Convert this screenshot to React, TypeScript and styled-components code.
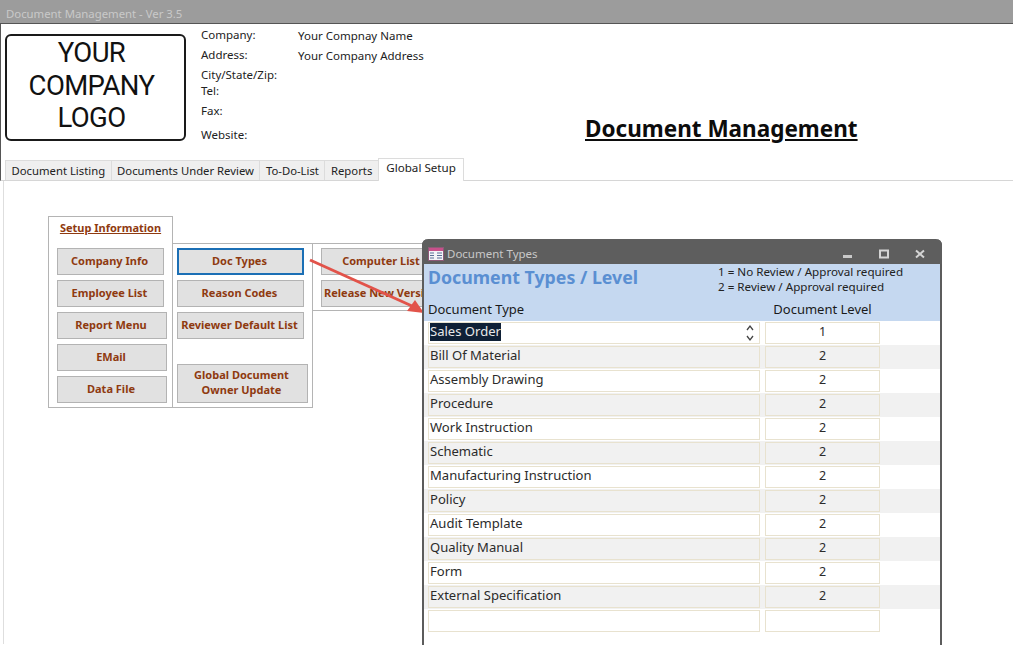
import React from 'react';
import styled, { createGlobalStyle } from 'styled-components';

const GlobalStyle = createGlobalStyle`
  html, body {
    margin: 0;
    padding: 0;
    background: #fff;
    font-family: "Noto Sans", "Open Sans", sans-serif;
    color: #1c1c1c;
  }
`;

const docTypes = [
  { name: 'Sales Order', level: '1' },
  { name: 'Bill Of Material', level: '2' },
  { name: 'Assembly Drawing', level: '2' },
  { name: 'Procedure', level: '2' },
  { name: 'Work Instruction', level: '2' },
  { name: 'Schematic', level: '2' },
  { name: 'Manufacturing Instruction', level: '2' },
  { name: 'Policy', level: '2' },
  { name: 'Audit Template', level: '2' },
  { name: 'Quality Manual', level: '2' },
  { name: 'Form', level: '2' },
  { name: 'External Specification', level: '2' },
  { name: '', level: '' },
];

const tabs = ['Document Listing', 'Documents Under Review', 'To-Do-List', 'Reports'];

const companyRows = [
  { label: 'Company:', value: 'Your Compnay Name', height: 20 },
  { label: 'Address:', value: 'Your Company Address', height: 20 },
  { label: 'City/State/Zip:', value: '', height: 16 },
  { label: 'Tel:', value: '', height: 20 },
  { label: 'Fax:', value: '', height: 24 },
  { label: 'Website:', value: '', height: 16 },
];

const App = () => {
  return (
    <Page>
      <GlobalStyle />
      <AppTitle>Document Management - Ver 3.5</AppTitle>
      <Body>
        <Header>
          <Logo>YOUR<br />COMPANY<br />LOGO</Logo>
          <CompanyInfo>
            {companyRows.map((row) => (
              <CompanyRow key={row.label} $height={row.height}>
                <CompanyLabel>{row.label}</CompanyLabel>
                <CompanyValue>{row.value}</CompanyValue>
              </CompanyRow>
            ))}
          </CompanyInfo>
          <Heading>Document Management</Heading>
        </Header>
        <TabBar>
          {tabs.map((tab) => <Tab key={tab}>{tab}</Tab>)}
          <ActiveTab>Global Setup</ActiveTab>
        </TabBar>
        <SetupArea>
          <SetupColumn>
            <SetupTitle>Setup Information</SetupTitle>
            <SetupButton $width={107}>Company Info</SetupButton>
            <SetupButton $width={107}>Employee List</SetupButton>
            <SetupButton $width={110}>Report Menu</SetupButton>
            <SetupButton $width={110}>EMail</SetupButton>
            <SetupButton $width={110}>Data File</SetupButton>
          </SetupColumn>
          <MiddleColumn>
            <SetupButton $width={127} $focused>Doc Types</SetupButton>
            <SetupButton $width={127}>Reason Codes</SetupButton>
            <SetupButton $width={127}>Reviewer Default List</SetupButton>
            <SetupButton $width={131} $tall>Global Document<br />Owner Update</SetupButton>
          </MiddleColumn>
          <RightColumn>
            <SetupButton $width={122}>Computer List</SetupButton>
            <SetupButton $width={122}>Release New Version</SetupButton>
          </RightColumn>
        </SetupArea>
      </Body>

      <Arrow viewBox="0 0 125 62" aria-hidden="true">
        <line x1="2" y1="2" x2="104" y2="48" stroke="#e2534a" strokeWidth="3" />
        <polygon points="116,55 99,53 107,42" fill="#e2534a" />
      </Arrow>

      <DocWindow>
        <WindowBar>
          <WindowIcon viewBox="0 0 16 14" aria-hidden="true">
            <rect x="0.5" y="0.5" width="15" height="13" fill="#f4f4f8" stroke="#8d5a78" />
            <rect x="1" y="1" width="14" height="3" fill="#c8508a" />
            <path d="M2 6h4M2 8.5h4M2 11h4M9 6h5M9 8.5h5M9 11h5" stroke="#5a6f96" strokeWidth="1" />
          </WindowIcon>
          <WindowTitle>Document Types</WindowTitle>
          <WindowControls>
            <svg width="10" height="10" viewBox="0 0 10 10" aria-hidden="true">
              <rect x="0" y="6" width="9" height="3" fill="#c9c9c9" />
            </svg>
            <svg width="10" height="10" viewBox="0 0 10 10" aria-hidden="true">
              <rect x="1" y="1.5" width="8" height="7" fill="none" stroke="#d4d4d4" strokeWidth="2" />
            </svg>
            <svg width="10" height="10" viewBox="0 0 10 10" aria-hidden="true">
              <path d="M1 1.5l8 7M9 1.5l-8 7" stroke="#d4d4d4" strokeWidth="2" />
            </svg>
          </WindowControls>
        </WindowBar>
        <FormHeader>
          <FormTop>
            <FormTitle>Document Types / Level</FormTitle>
            <Legend>
              <div>1 = No Review / Approval required</div>
              <div>2 = Review / Approval required</div>
            </Legend>
          </FormTop>
          <ColumnHeads>
            <TypeHead>Document Type</TypeHead>
            <LevelHead>Document Level</LevelHead>
          </ColumnHeads>
        </FormHeader>
        <Rows>
          {docTypes.map((doc, i) => (
            <Row key={i} $alt={i % 2 === 1}>
              <TypeCell>
                {i === 0 ? <Selected>{doc.name}</Selected> : doc.name}
                {i === 0 && (
                  <Spinner viewBox="0 0 10 20" aria-hidden="true">
                    <path d="M2 7l3-4 3 4M2 13l3 4 3-4" fill="none" stroke="#444" strokeWidth="1.3" />
                  </Spinner>
                )}
              </TypeCell>
              <LevelCell>{doc.level}</LevelCell>
            </Row>
          ))}
        </Rows>
      </DocWindow>
    </Page>
  );
};

const Page = styled.div`
  position: relative;
  width: 1013px;
  height: 645px;
  overflow: hidden;
  font-size: 11.5px;
`;

const AppTitle = styled.div`
  height: 23px;
  background: #9c9c9c;
  color: #c9c9c9;
  font-size: 11.35px;
  line-height: 27px;
  padding-left: 6px;
  box-sizing: border-box;
`;

const Body = styled.div`
  display: flex;
  flex-direction: column;
  border-top: 1px solid #555;
  height: 621px;
  box-sizing: border-box;
`;

const Header = styled.div`
  display: flex;
  align-items: flex-start;
  height: 135px;
  padding: 10px 0 0 4px;
  box-sizing: border-box;
  border-left: 1px solid #555;
`;

const Logo = styled.div`
  width: 181px;
  height: 107px;
  box-sizing: border-box;
  border: 2px solid #1a1a1a;
  border-radius: 6px;
  font-family: Roboto, "Noto Sans", sans-serif;
  font-size: 27.5px;
  line-height: 32.5px;
  text-align: center;
  letter-spacing: -0.6px;
  color: #111;
  padding: 1px 8px 0 0;
`;

const CompanyInfo = styled.div`
  margin: -9px 0 0 15px;
  width: 384px;
  flex: none;
`;

const CompanyRow = styled.div<{ $height: number }>`
  display: flex;
  height: ${(p) => p.$height}px;
  line-height: 20px;
  color: #222;
`;

const CompanyLabel = styled.span`
  width: 97px;
`;

const CompanyValue = styled.span`
  padding-top: 1px;
`;

const Heading = styled.h1`
  margin: 80px 0 0 0;
  font-family: "Noto Sans", sans-serif;
  font-size: 22.5px;
  line-height: 30px;
  font-weight: 700;
  text-decoration: underline;
  color: #0c0c0c;
  white-space: nowrap;
`;

const TabBar = styled.div`
  display: flex;
  align-items: flex-end;
  height: 21px;
  padding-left: 4px;
  border-left: 1px solid #555;
  border-bottom: 1px solid #d6d6d6;
`;

const Tab = styled.div`
  height: 20px;
  line-height: 19px;
  padding: 0 5.5px;
  background: #efefef;
  border: 1px solid #dcdcdc;
  border-bottom: none;
  margin-right: -1px;
  font-size: 11.3px;
  box-sizing: border-box;
  color: #222;
  white-space: nowrap;
`;

const ActiveTab = styled(Tab)`
  position: relative;
  height: 23px;
  line-height: 18px;
  background: #fff;
  margin-bottom: -1px;
  padding: 0 7.5px;
  font-size: 11.6px;
`;

const SetupArea = styled.div`
  flex: 1;
  display: flex;
  align-items: flex-start;
  margin-left: 3px;
  border-left: 1px solid #dedede;
  padding: 35px 0 0 44px;
`;

const Column = styled.div`
  display: flex;
  flex-direction: column;
  gap: 5px;
  border: 1px solid #b4b4b4;
  box-sizing: border-box;
`;

const SetupColumn = styled(Column)`
  width: 125px;
  height: 192px;
  padding: 0 0 0 8px;
`;

const SetupTitle = styled.div`
  height: 26px;
  margin-left: -8px;
  text-align: center;
  line-height: 21px;
  font-weight: 700;
  font-size: 11px;
  text-decoration: underline;
  color: #8f3a10;
`;

const MiddleColumn = styled(Column)`
  width: 140px;
  height: 165px;
  margin: 27px 0 0 0;
  padding: 4px 0 0 4px;
  border-left: none;
`;

const RightColumn = styled(Column)`
  width: 133px;
  height: 68px;
  margin: 27px 0 0 0;
  padding: 4px 0 0 8px;
  border-left: none;
`;

const SetupButton = styled.button<{ $width: number; $tall?: boolean; $focused?: boolean }>`
  width: ${(p) => p.$width}px;
  height: ${(p) => (p.$tall ? 39 : 27)}px;
  margin-top: ${(p) => (p.$tall ? 20 : 0)}px;
  padding: 0 2px ${(p) => (p.$tall ? 4 : 2)}px 0;
  flex: none;
  background: #e1e1e1;
  border: ${(p) => (p.$focused ? '2px solid #1b6fb5' : '1px solid #b3b3b3')};
  font-family: "Noto Sans", sans-serif;
  font-size: 11px;
  line-height: 15px;
  font-weight: 700;
  color: #8f3a10;
  white-space: nowrap;
  overflow: hidden;
`;

const Arrow = styled.svg`
  position: absolute;
  left: 308px;
  top: 258px;
  width: 125px;
  height: 62px;
  z-index: 1;
`;

const DocWindow = styled.div`
  position: absolute;
  left: 422px;
  top: 239px;
  width: 520px;
  height: 420px;
  box-sizing: border-box;
  background: #fff;
  border: 2px solid #5c5c5c;
  border-top: none;
  border-radius: 6px 6px 0 0;
  z-index: 2;
`;

const WindowBar = styled.div`
  display: flex;
  align-items: center;
  height: 25px;
  margin: 0 -2px;
  padding: 4px 17px 0 6px;
  box-sizing: border-box;
  background: #5e5e5e;
  border-radius: 6px 6px 0 0;
`;

const WindowIcon = styled.svg`
  width: 16px;
  height: 14px;
  flex: none;
`;

const WindowTitle = styled.span`
  margin-left: 3px;
  flex: 1;
  font-size: 11.5px;
  color: #c8c8c8;
`;

const WindowControls = styled.div`
  display: flex;
  gap: 26px;
  align-items: center;
`;

const FormHeader = styled.div`
  height: 57px;
  background: #c5d8f0;
  box-sizing: border-box;
`;

const FormTop = styled.div`
  display: flex;
  height: 36px;
`;

const FormTitle = styled.div`
  width: 290px;
  padding-left: 4px;
  box-sizing: content-box;
  font-size: 17.75px;
  line-height: 27px;
  font-weight: 700;
  color: #5a8fd2;
  white-space: nowrap;
`;

const Legend = styled.div`
  font-size: 11.65px;
  line-height: 15px;
  color: #222;
  white-space: nowrap;
`;

const ColumnHeads = styled.div`
  display: flex;
  font-size: 13px;
  line-height: 18px;
  color: #1a1a1a;
`;

const TypeHead = styled.div`
  width: 341px;
  padding-left: 4px;
  box-sizing: border-box;
`;

const LevelHead = styled.div`
  width: 115px;
  text-align: center;
  white-space: nowrap;
`;

const Rows = styled.div`
  display: flex;
  flex-direction: column;
`;

const Row = styled.div<{ $alt: boolean }>`
  display: flex;
  align-items: center;
  gap: 5px;
  height: 24px;
  padding-left: 4px;
  background: ${(p) => (p.$alt ? '#f1f1f1' : '#fff')};
`;

const Cell = styled.div`
  position: relative;
  height: 22px;
  box-sizing: border-box;
  border: 1px solid #e8e2cf;
  font-size: 13.05px;
  line-height: 16px;
  color: #2b2b2b;
`;

const TypeCell = styled(Cell)`
  width: 332px;
  padding-left: 1px;
`;

const LevelCell = styled(Cell)`
  width: 115px;
  text-align: center;
  font-size: 12.5px;
  line-height: 18px;
`;

const Selected = styled.span`
  display: inline-block;
  background: #0f2036;
  color: #e8e8e8;
  height: 18px;
  line-height: 16px;
`;

const Spinner = styled.svg`
  position: absolute;
  right: 4px;
  top: 0;
  width: 10px;
  height: 20px;
`;

export default App;
